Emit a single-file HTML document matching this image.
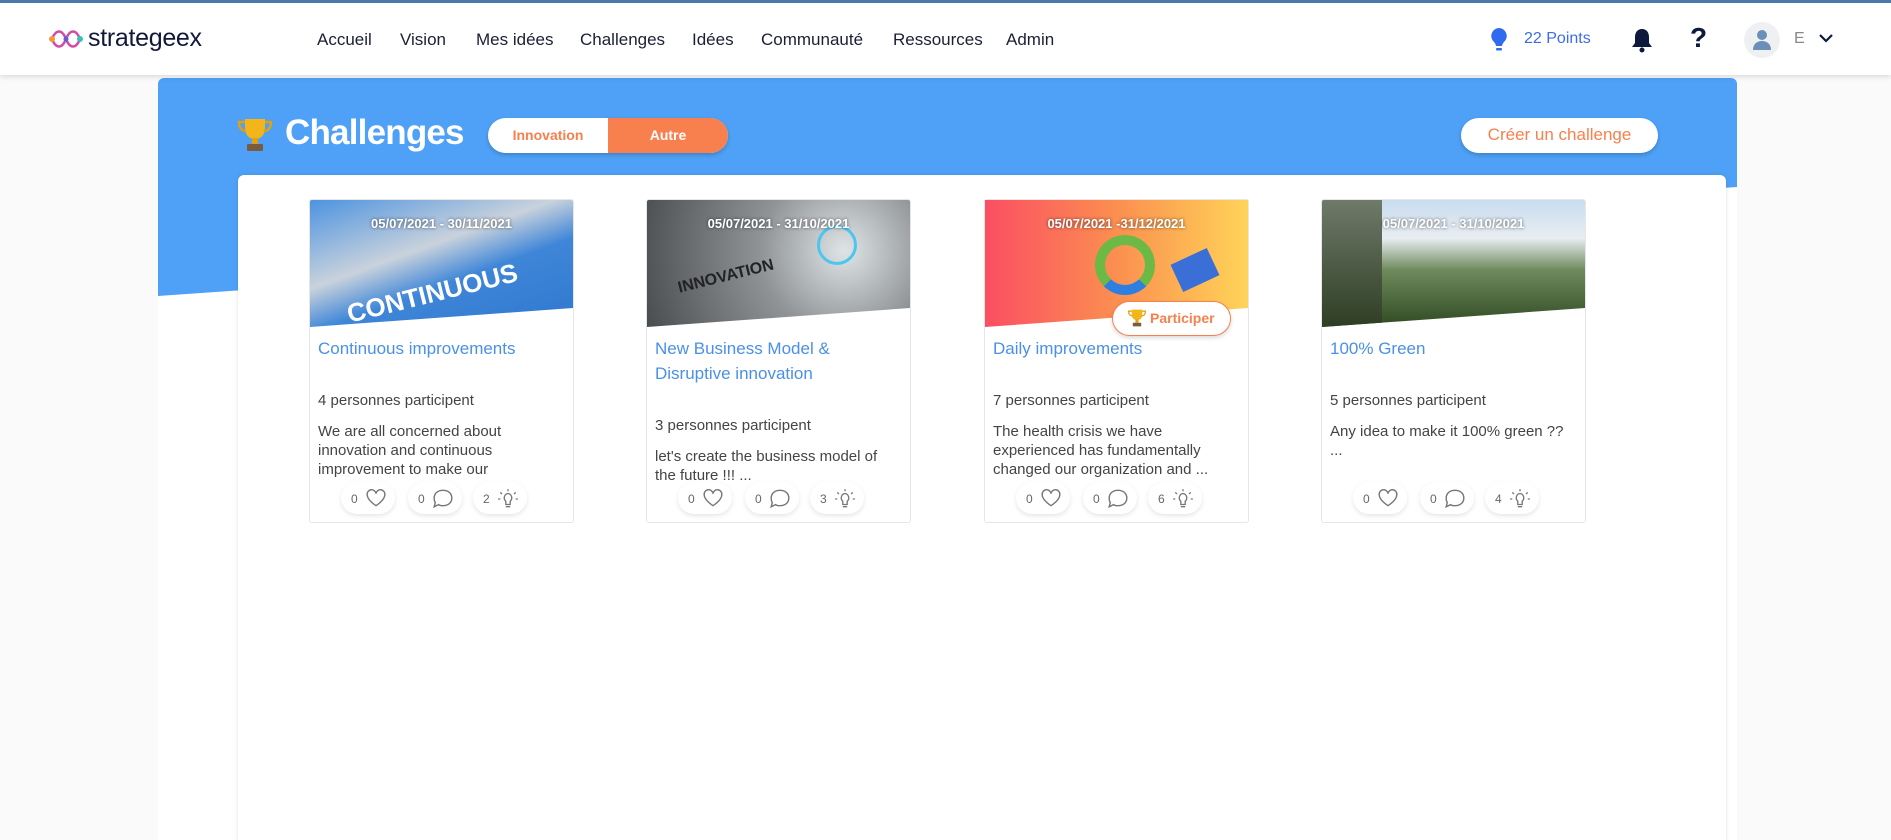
<!DOCTYPE html>
<html><head><meta charset="utf-8"><style>
*{box-sizing:border-box;margin:0;padding:0}
html,body{width:1891px;height:840px;overflow:hidden}
body{background:#fafafa;font-family:"Liberation Sans",sans-serif;position:relative}
.hdr{position:absolute;left:0;top:0;width:1891px;height:75px;background:#fff;border-top:3px solid #4a7aad;box-shadow:0 2px 5px rgba(0,0,0,.12);z-index:5}
.nav{position:absolute;top:27px;font-size:17px;color:#1a1f36}
.outer{position:absolute;left:158px;top:78px;width:1579px;height:762px;background:#fff;border-radius:6px 6px 0 0}
.blue{position:absolute;left:158px;top:78px;width:1579px;height:220px;background:#4ea1f6;border-radius:6px 6px 0 0;clip-path:polygon(0 0,100% 0,100% 109px,0 218px)}
.panel{position:absolute;left:238px;top:175px;width:1488px;height:700px;background:#fff;border-radius:6px;box-shadow:0 0 4px rgba(0,0,0,.12)}
.card{position:absolute;top:199px;width:265px;height:324px;background:#fff;border:1px solid #e6e6e6;border-radius:3px;overflow:hidden}
.img{position:absolute;left:0;top:0;width:100%;height:127px;clip-path:polygon(0 0,100% 0,100% 108px,0 127px)}
.date{position:absolute;top:16px;width:100%;text-align:center;color:#fff;font-weight:bold;font-size:13px;text-shadow:0 0 3px rgba(0,0,0,.6)}
.ttl{position:absolute;left:8px;top:136px;right:8px;color:#4a90e8;font-size:17px;line-height:25px}
.par{position:absolute;left:8px;font-size:15px;color:#444}
.desc{position:absolute;left:8px;right:8px;font-size:15px;line-height:19px;color:#444}
.pill{position:absolute;top:282px;width:54px;height:32px;border-radius:16px;background:#fff;box-shadow:0 2px 5px rgba(0,0,0,.1);font-size:12px;color:#666;padding:10px 0 0 10px}
.pill svg{position:absolute;right:8px;top:6px}
</style></head><body>
<div class="hdr">
 <svg style="position:absolute;left:48px;top:23px" width="36" height="26" viewBox="0 0 36 26"><path d="M4 13c4-10 10-10 14 0s10 10 14 0c-4-10-10-10-14 0S8 23 4 13z" fill="none" stroke="#d14ea5" stroke-width="2.5"/><circle cx="4" cy="13" r="3" fill="#f29a38"/><circle cx="32" cy="13" r="3" fill="#3ac0b5"/><circle cx="18" cy="13" r="2.5" fill="#5b5fd8"/></svg>
 <div style="position:absolute;left:88px;top:21px;font-size:25px;color:#13183a;letter-spacing:-.3px">strategeex</div>
 <div class="nav" style="left:317px">Accueil</div>
 <div class="nav" style="left:400px">Vision</div>
 <div class="nav" style="left:476px">Mes idées</div>
 <div class="nav" style="left:580px">Challenges</div>
 <div class="nav" style="left:692px">Idées</div>
 <div class="nav" style="left:761px">Communauté</div>
 <div class="nav" style="left:893px">Ressources</div>
 <div class="nav" style="left:1006px">Admin</div>
 <svg style="position:absolute;left:1490px;top:24px" width="18" height="26" viewBox="0 0 18 26"><path d="M9 1a8 8 0 0 0-5 14c1 1 2 3 2 4h6c0-1 1-3 2-4A8 8 0 0 0 9 1z" fill="#2f6af0"/><rect x="6" y="21" width="6" height="2.5" rx="1" fill="#2f6af0"/></svg>
 <div style="position:absolute;left:1524px;top:27px;font-size:16px;color:#3d6bea">22 Points</div>
 <svg style="position:absolute;left:1631px;top:24px" width="22" height="26" viewBox="0 0 22 26"><path d="M11 2c-5 0-7 4-7 8v6l-3 4h20l-3-4v-6c0-4-2-8-7-8z" fill="#0e1a3d"/><circle cx="11" cy="23" r="2.5" fill="#0e1a3d"/></svg>
 <div style="position:absolute;left:1690px;top:19px;font-size:28px;font-weight:bold;color:#0e1a3d">?</div>
 <div style="position:absolute;left:1744px;top:19px;width:36px;height:36px;border-radius:50%;background:#eef0f2"></div>
 <svg style="position:absolute;left:1752px;top:25px" width="20" height="24" viewBox="0 0 20 24"><circle cx="10" cy="7" r="5" fill="#6b8fb8"/><path d="M1 22c0-6 4-9 9-9s9 3 9 9z" fill="#6b8fb8"/></svg>
 <div style="position:absolute;left:1794px;top:27px;font-size:16px;color:#888">E</div>
 <svg style="position:absolute;left:1819px;top:31px" width="14" height="9" viewBox="0 0 14 9"><path d="M1 1l6 6 6-6" fill="none" stroke="#0e1a3d" stroke-width="2.2"/></svg>
</div>
<div class="outer"></div>
<div class="blue"></div>
<svg style="position:absolute;left:236px;top:116px" width="38" height="38" viewBox="0 0 38 38"><path d="M9 3h20v9c0 7-4 11-10 11S9 19 9 12z" fill="#f2b51a"/><path d="M9 6H3c0 6 3 9 7 9M29 6h6c0 6-3 9-7 9" fill="none" stroke="#e3a010" stroke-width="2.5"/><rect x="16" y="22" width="6" height="6" fill="#e3a010"/><rect x="11" y="28" width="16" height="7" rx="1" fill="#7a5b3e"/></svg>
<div style="position:absolute;left:285px;top:113px;font-size:35px;font-weight:bold;color:#fff;letter-spacing:-.8px">Challenges</div>
<div style="position:absolute;left:488px;top:118px;width:240px;height:35px;border-radius:18px;background:#fff;box-shadow:0 2px 4px rgba(0,0,0,.2);overflow:hidden">
 <div style="position:absolute;left:120px;top:0;width:120px;height:35px;background:#f7804e"></div>
 <div style="position:absolute;left:0;width:120px;top:9px;text-align:center;color:#f7804e;font-weight:bold;font-size:14px">Innovation</div>
 <div style="position:absolute;left:120px;width:120px;top:9px;text-align:center;color:#fff;font-weight:bold;font-size:14px">Autre</div>
</div>
<div style="position:absolute;left:1461px;top:118px;width:197px;height:35px;border-radius:18px;background:#fff;box-shadow:0 2px 4px rgba(0,0,0,.2);text-align:center;padding-top:7px;color:#f7804e;font-size:17px">Créer un challenge</div>
<div class="panel"></div>

<div class="card" style="left:309px">
 <div class="img" style="background:linear-gradient(160deg,#4d93e0 0%,#c9d2dc 40%,#3f86d8 60%,#2f78d0 100%)"><div style="position:absolute;left:35px;top:78px;color:#fff;font-weight:bold;font-size:26px;transform:rotate(-14deg)">CONTINUOUS</div></div>
 <div class="date">05/07/2021 - 30/11/2021</div>
 <div class="ttl">Continuous improvements</div>
 <div class="par" style="top:192px">4 personnes participent</div>
 <div class="desc" style="top:222px">We are all concerned about innovation and continuous improvement to make our</div>
 <div class="pill" style="left:31px">0<svg width="22" height="20" viewBox="0 0 20 18"><path d="M10 16S2 11 2 6a4 4 0 0 1 8-1 4 4 0 0 1 8 1c0 5-8 10-8 10z" fill="none" stroke="#777" stroke-width="1.3"/></svg></div>
 <div class="pill" style="left:98px">0<svg width="22" height="20" viewBox="0 0 20 18"><path d="M10 2c5 0 8 3 8 7s-3 7-8 7c-2 0-3 0-4-1l-4 2 1-4c-1-1-1-2-1-4 0-4 3-7 8-7z" fill="none" stroke="#777" stroke-width="1.3"/></svg></div>
 <div class="pill" style="left:163px">2<svg width="22" height="22" viewBox="0 0 20 20"><path d="M10 5a4 4 0 0 0-2 7v3h4v-3a4 4 0 0 0-2-7zM8 17h4M10 1v2M3 4l1.5 1.5M17 4l-1.5 1.5M1 10h2M17 10h2" fill="none" stroke="#777" stroke-width="1.2"/></svg></div>
</div>

<div class="card" style="left:646px">
 <div class="img" style="background:radial-gradient(circle at 75% 40%,#dfe4e6,#8f9396 40%,#4a4d50 100%)"><div style="position:absolute;left:30px;top:68px;color:#222;font-weight:bold;font-size:16px;transform:rotate(-14deg)">INNOVATION</div><div style="position:absolute;left:170px;top:25px;width:40px;height:40px;border-radius:50%;border:3px solid #4cc6ef"></div></div>
 <div class="date">05/07/2021 - 31/10/2021</div>
 <div class="ttl">New Business Model &amp;<br>Disruptive innovation</div>
 <div class="par" style="top:217px">3 personnes participent</div>
 <div class="desc" style="top:247px">let's create the business model of the future !!! ...</div>
 <div class="pill" style="left:31px">0<svg width="22" height="20" viewBox="0 0 20 18"><path d="M10 16S2 11 2 6a4 4 0 0 1 8-1 4 4 0 0 1 8 1c0 5-8 10-8 10z" fill="none" stroke="#777" stroke-width="1.3"/></svg></div>
 <div class="pill" style="left:98px">0<svg width="22" height="20" viewBox="0 0 20 18"><path d="M10 2c5 0 8 3 8 7s-3 7-8 7c-2 0-3 0-4-1l-4 2 1-4c-1-1-1-2-1-4 0-4 3-7 8-7z" fill="none" stroke="#777" stroke-width="1.3"/></svg></div>
 <div class="pill" style="left:163px">3<svg width="22" height="22" viewBox="0 0 20 20"><path d="M10 5a4 4 0 0 0-2 7v3h4v-3a4 4 0 0 0-2-7zM8 17h4M10 1v2M3 4l1.5 1.5M17 4l-1.5 1.5M1 10h2M17 10h2" fill="none" stroke="#777" stroke-width="1.2"/></svg></div>
</div>

<div class="card" style="left:984px;overflow:visible">
 <div class="img" style="background:linear-gradient(90deg,#fb4e63,#fb8f50 50%,#ffd458)"><div style="position:absolute;left:110px;top:35px;width:60px;height:60px;border-radius:50%;border:10px solid #6cba45;border-bottom-color:#2f7fe0"></div><div style="position:absolute;left:190px;top:55px;width:40px;height:30px;background:#3a6fd8;transform:rotate(-25deg)"></div></div>
 <div class="date">05/07/2021 -31/12/2021</div>
 <div style="position:absolute;left:127px;top:101px;width:119px;height:35px;border-radius:18px;background:#fff;border:1px solid #f7804e;box-shadow:0 2px 4px rgba(0,0,0,.15);color:#f7804e;font-weight:bold;font-size:14px;padding:8px 0 0 37px">Participer</div>
 <svg style="position:absolute;left:142px;top:108px" width="20" height="20" viewBox="0 0 38 38"><path d="M9 3h20v9c0 7-4 11-10 11S9 19 9 12z" fill="#f2b51a"/><path d="M9 6H3c0 6 3 9 7 9M29 6h6c0 6-3 9-7 9" fill="none" stroke="#e3a010" stroke-width="2.5"/><rect x="16" y="22" width="6" height="6" fill="#e3a010"/><rect x="11" y="28" width="16" height="7" rx="1" fill="#7a5b3e"/></svg>
 <div class="ttl">Daily improvements</div>
 <div class="par" style="top:192px">7 personnes participent</div>
 <div class="desc" style="top:222px">The health crisis we have experienced has fundamentally changed our organization and ...</div>
 <div class="pill" style="left:31px">0<svg width="22" height="20" viewBox="0 0 20 18"><path d="M10 16S2 11 2 6a4 4 0 0 1 8-1 4 4 0 0 1 8 1c0 5-8 10-8 10z" fill="none" stroke="#777" stroke-width="1.3"/></svg></div>
 <div class="pill" style="left:98px">0<svg width="22" height="20" viewBox="0 0 20 18"><path d="M10 2c5 0 8 3 8 7s-3 7-8 7c-2 0-3 0-4-1l-4 2 1-4c-1-1-1-2-1-4 0-4 3-7 8-7z" fill="none" stroke="#777" stroke-width="1.3"/></svg></div>
 <div class="pill" style="left:163px">6<svg width="22" height="22" viewBox="0 0 20 20"><path d="M10 5a4 4 0 0 0-2 7v3h4v-3a4 4 0 0 0-2-7zM8 17h4M10 1v2M3 4l1.5 1.5M17 4l-1.5 1.5M1 10h2M17 10h2" fill="none" stroke="#777" stroke-width="1.2"/></svg></div>
</div>

<div class="card" style="left:1321px">
 <div class="img" style="background:linear-gradient(180deg,#c9dcef 0%,#e8eef2 30%,#6f8a5c 55%,#2f4a22 100%)"><div style="position:absolute;left:0;top:0;width:60px;height:127px;background:linear-gradient(180deg,#6f7a6a,#2e3e24)"></div></div>
 <div class="date">05/07/2021 - 31/10/2021</div>
 <div class="ttl">100% Green</div>
 <div class="par" style="top:192px">5 personnes participent</div>
 <div class="desc" style="top:222px">Any idea to make it 100% green ?? ...</div>
 <div class="pill" style="left:31px">0<svg width="22" height="20" viewBox="0 0 20 18"><path d="M10 16S2 11 2 6a4 4 0 0 1 8-1 4 4 0 0 1 8 1c0 5-8 10-8 10z" fill="none" stroke="#777" stroke-width="1.3"/></svg></div>
 <div class="pill" style="left:98px">0<svg width="22" height="20" viewBox="0 0 20 18"><path d="M10 2c5 0 8 3 8 7s-3 7-8 7c-2 0-3 0-4-1l-4 2 1-4c-1-1-1-2-1-4 0-4 3-7 8-7z" fill="none" stroke="#777" stroke-width="1.3"/></svg></div>
 <div class="pill" style="left:163px">4<svg width="22" height="22" viewBox="0 0 20 20"><path d="M10 5a4 4 0 0 0-2 7v3h4v-3a4 4 0 0 0-2-7zM8 17h4M10 1v2M3 4l1.5 1.5M17 4l-1.5 1.5M1 10h2M17 10h2" fill="none" stroke="#777" stroke-width="1.2"/></svg></div>
</div>
</body></html>
